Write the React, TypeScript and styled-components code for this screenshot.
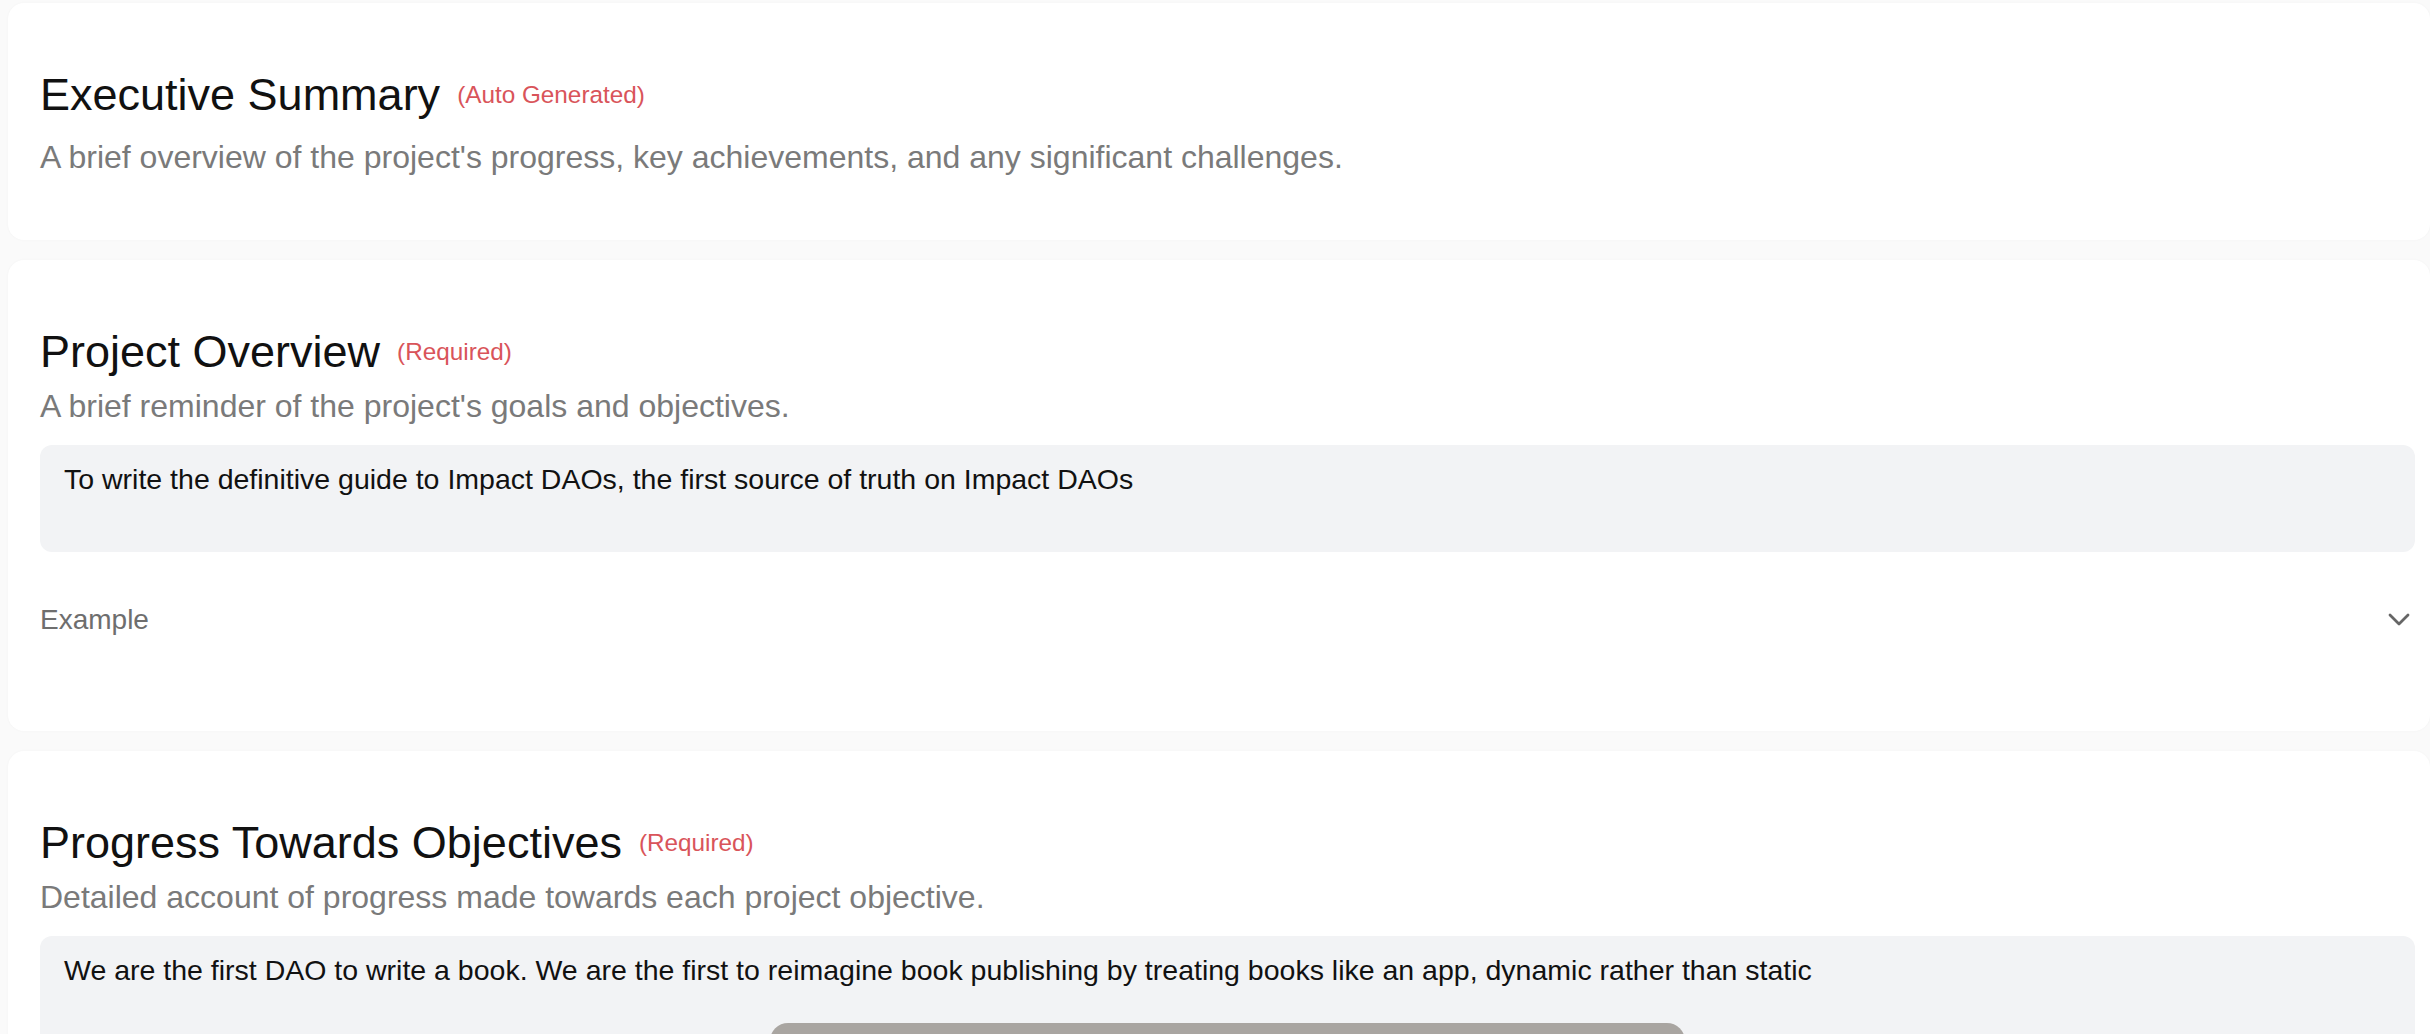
import React from "react";
import styled, { createGlobalStyle } from "styled-components";

const GlobalStyle = createGlobalStyle`
  html, body {
    margin: 0;
    padding: 0;
    background: #fafafa;
    overflow: hidden;
  }
  body {
    font-family: "Liberation Sans", Arial, sans-serif;
    color: #111;
  }
`;

const Page = styled.main`
  display: flex;
  flex-direction: column;
  gap: 20px;
  padding: 3px 0 0 8px;
  box-sizing: border-box;
  width: 100%;
`;

const Card = styled.section`
  background: #ffffff;
  border-radius: 16px;
  box-shadow: 0 0 3px rgba(0, 0, 0, 0.03);
  padding: 65px 15px 63px 32px;
  display: flex;
  flex-direction: column;
`;

const TitleRow = styled.div`
  display: flex;
  align-items: center;
  gap: 17px;
`;

const Title = styled.h2`
  margin: 0;
  font-size: 45px;
  line-height: 54px;
  font-weight: 400;
  color: #111;
`;

const Tag = styled.span`
  font-size: 24.3px;
  line-height: 30px;
  color: #d9545a;
`;

const Description = styled.p<{ $gap: number }>`
  margin: ${(p) => p.$gap}px 0 0;
  font-size: 32px;
  line-height: 40px;
  color: #7a7a7a;
`;

const Field = styled.div<{ $minHeight?: number }>`
  margin-top: 19px;
  background: #f2f3f5;
  border-radius: 12px;
  padding: 14px 24px;
  box-sizing: border-box;
  min-height: ${(p) => p.$minHeight ?? 0}px;
  display: flex;
  flex-direction: column;
`;

const FieldText = styled.p`
  margin: 0;
  font-size: 28.5px;
  line-height: 40px;
  color: #111;
`;

const MediaBlock = styled.div`
  align-self: center;
  margin-top: 33px;
  width: 915px;
  height: 360px;
  border-radius: 18px;
  background: #a9a5a1;
`;

const Accordion = styled.div`
  margin: 48px 0 28px;
  display: flex;
  align-items: center;
  justify-content: space-between;
  height: 40px;
`;

const AccordionLabel = styled.span`
  font-size: 28px;
  line-height: 40px;
  color: #6e6e6e;
`;

const Chevron = styled.svg`
  width: 22px;
  height: 14px;
  margin-right: 5px;
  flex-shrink: 0;
`;

type SectionProps = {
  title: string;
  tag: string;
  description: string;
  descGap: number;
  children?: React.ReactNode;
};

const Section = ({ title, tag, description, descGap, children }: SectionProps) => (
  <Card>
    <TitleRow>
      <Title>{title}</Title>
      <Tag>{tag}</Tag>
    </TitleRow>
    <Description $gap={descGap}>{description}</Description>
    {children}
  </Card>
);

export default function App() {
  return (
    <>
      <GlobalStyle />
      <Page>
        <Section
          title="Executive Summary"
          tag="(Auto Generated)"
          description="A brief overview of the project's progress, key achievements, and any significant challenges."
          descGap={15}
        />
        <Section
          title="Project Overview"
          tag="(Required)"
          description="A brief reminder of the project's goals and objectives."
          descGap={7}
        >
          <Field $minHeight={107}>
            <FieldText>
              To write the definitive guide to Impact DAOs, the first source of truth on Impact DAOs
            </FieldText>
          </Field>
          <Accordion>
            <AccordionLabel>Example</AccordionLabel>
            <Chevron viewBox="0 0 22 14" fill="none">
              <polyline
                points="2,2 11,11 20,2"
                stroke="#666"
                strokeWidth="2.8"
                strokeLinecap="round"
                strokeLinejoin="round"
              />
            </Chevron>
          </Accordion>
        </Section>
        <Section
          title="Progress Towards Objectives"
          tag="(Required)"
          description="Detailed account of progress made towards each project objective."
          descGap={7}
        >
          <Field>
            <FieldText>
              We are the first DAO to write a book. We are the first to reimagine book publishing by treating books like an app, dynamic rather than static
            </FieldText>
            <MediaBlock />
          </Field>
        </Section>
      </Page>
    </>
  );
}
